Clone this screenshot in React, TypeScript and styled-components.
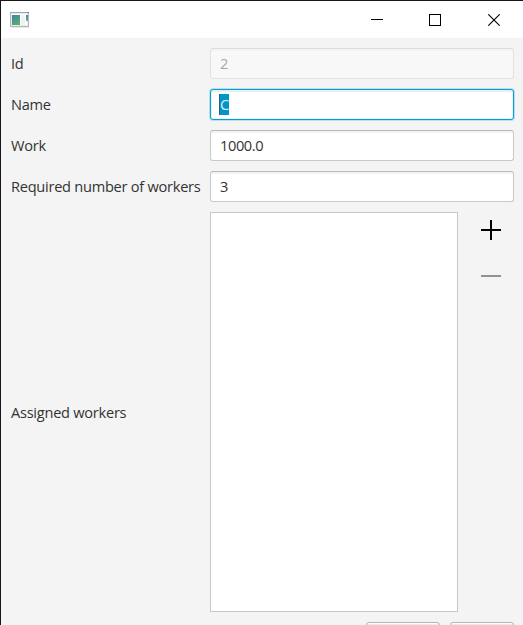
import React from "react";
import styled, { createGlobalStyle, css } from "styled-components";

const GlobalStyle = createGlobalStyle`
  * { box-sizing: border-box; }
  body { margin: 0; background: #f4f4f4; overflow: hidden; }
`;

const Window = styled.div`
  width: 523px;
  height: 625px;
  overflow: hidden;
  border-top: 1px solid #17171b;
  border-left: 1px solid #17171b;
  background: #f4f4f4;
  color: #333;
  font: 14.6px/20px "Open Sans", "Noto Sans", sans-serif;
`;

const TitleBar = styled.header`
  display: flex;
  align-items: center;
  justify-content: space-between;
  height: 37px;
  padding-left: 9px;
  background: #fff;
`;

const AppIcon = styled.svg`
  display: block;
  width: 20px;
  height: 17px;
`;

const WindowControls = styled.div`
  display: flex;
`;

const WindowButton = styled.button<{ $width: number }>`
  display: flex;
  justify-content: center;
  align-items: center;
  width: ${(p) => p.$width}px;
  height: 37px;
  padding: 0;
  border: 0;
  background: none;

  svg { display: block; }
`;

const Form = styled.main`
  display: grid;
  grid-template-columns: 189px 304px;
  grid-template-rows: repeat(4, 31px) 400px 31px;
  gap: 10px;
  padding: 10px 8px 0 10px;
`;

const Label = styled.label<{ $tall?: boolean }>`
  align-self: center;
  white-space: nowrap;
  letter-spacing: -0.26px;
  padding-bottom: ${(p) => (p.$tall ? 0 : 2)}px;
`;

const Field = styled.div<{ $state?: "focused" | "disabled" }>`
  display: flex;
  align-items: center;
  height: 31px;
  padding: 0 9px 2px;
  border: 1px solid #c9c9c9;
  border-top-color: #b9b9b9;
  border-radius: 3px;
  background: #fff;
  box-shadow: inset 0 2px 1px #f3f3f3;
  letter-spacing: -0.4px;

  ${(p) => p.$state === "disabled" && css`
    opacity: 0.4;
  `}
  ${(p) => p.$state === "focused" && css`
    padding-bottom: 0;
    border-color: #0b9bcc;
    box-shadow: 0 0 0 1px #b9e0ed, inset 0 0 0 1px #e2f3f9, inset 0 2px 1px #dff0f6;
  `}
`;

const Selection = styled.span`
  width: 10px;
  height: 21px;
  margin-left: -1px;
  border-left: 1px solid #315e6c;
  background: #0096c9;
  color: #d9f1f9;
  line-height: 20px;
  overflow: hidden;
`;

const Assignment = styled.div`
  display: flex;
  gap: 10px;
`;

const WorkerList = styled.div`
  width: 248px;
  height: 400px;
  border: 1px solid #c8c8c8;
  background: #fff;
`;

const ListActions = styled.div`
  display: flex;
  flex-direction: column;
  gap: 10px;
  width: 46px;
`;

const ListButton = styled.button`
  display: grid;
  place-items: center;
  width: 46px;
  height: 36px;
  padding: 0;
  border: 0;
  background: none;
  color: #000;

  &:disabled { color: #929292; }
  svg { display: block; }
`;

const Footer = styled.footer`
  display: flex;
  justify-content: flex-end;
  gap: 10px;
`;

const ActionButton = styled.button<{ $width: number }>`
  width: ${(p) => p.$width}px;
  height: 31px;
  border: 1px solid #b5b5b5;
  border-radius: 3px;
  background: linear-gradient(#fff 1px, #ececec 1px, #dedede);
`;

function ProgramIcon() {
  return (
    <AppIcon viewBox="0 0 20 17" aria-hidden="true">
      <defs>
        <linearGradient id="pane" x1="0" y1="0" x2="0.5" y2="1">
          <stop offset="0" stopColor="#4380aa" />
          <stop offset="1" stopColor="#55ad70" />
        </linearGradient>
        <linearGradient id="strip" x1="0" y1="0" x2="0" y2="1">
          <stop offset="0" stopColor="#477fc2" />
          <stop offset="1" stopColor="#69b979" />
        </linearGradient>
      </defs>
      <path d="M1 16.5H19" stroke="#e8e8e8" />
      <rect x=".5" y="1.5" width="18" height="14" fill="#fff" stroke="#b3b6bc" />
      <path d="M0 1.5H17" stroke="#9ea5b0" />
      <path d="M17 1.5H19" stroke="#79818f" />
      <rect x="1.5" y="2.5" width="16" height="12" fill="none" stroke="#e8eaec" />
      <rect x="2" y="4" width="8" height="10" fill="url(#pane)" />
      <rect x="11" y="4" width="4" height="10" fill="#f1f2f3" />
      <rect x="16" y="4" width="2" height="6" fill="url(#strip)" />
    </AppIcon>
  );
}

export default function App() {
  return (
    <>
      <GlobalStyle />
      <Window>
        <TitleBar>
          <ProgramIcon />
          <WindowControls>
            <WindowButton $width={58} aria-label="Minimize">
              <svg width="12" height="12"><path d="M0 5.5H12" stroke="#000" /></svg>
            </WindowButton>
            <WindowButton $width={58} aria-label="Maximize">
              <svg width="12" height="12"><rect x=".5" y=".5" width="11" height="11" fill="none" stroke="#000" /></svg>
            </WindowButton>
            <WindowButton $width={59} aria-label="Close">
              <svg width="12" height="12"><path d="M.3 .3L11.7 11.7M11.7 .3L.3 11.7" stroke="#000" strokeWidth="1.1" /></svg>
            </WindowButton>
          </WindowControls>
        </TitleBar>
        <Form>
          <Label>Id</Label>
          <Field $state="disabled">2</Field>
          <Label>Name</Label>
          <Field $state="focused"><Selection>C</Selection></Field>
          <Label>Work</Label>
          <Field>1000.0</Field>
          <Label>Required number of workers</Label>
          <Field>3</Field>
          <Label $tall>Assigned workers</Label>
          <Assignment>
            <WorkerList />
            <ListActions>
              <ListButton aria-label="Add worker">
                <svg width="20" height="20"><path d="M0 10H20M10 0V20" stroke="currentColor" strokeWidth="2" /></svg>
              </ListButton>
              <ListButton disabled aria-label="Remove worker">
                <svg width="20" height="20"><path d="M0 10H20" stroke="currentColor" strokeWidth="2" /></svg>
              </ListButton>
            </ListActions>
          </Assignment>
          <span />
          <Footer>
            <ActionButton $width={74} />
            <ActionButton $width={64} />
          </Footer>
        </Form>
      </Window>
    </>
  );
}
